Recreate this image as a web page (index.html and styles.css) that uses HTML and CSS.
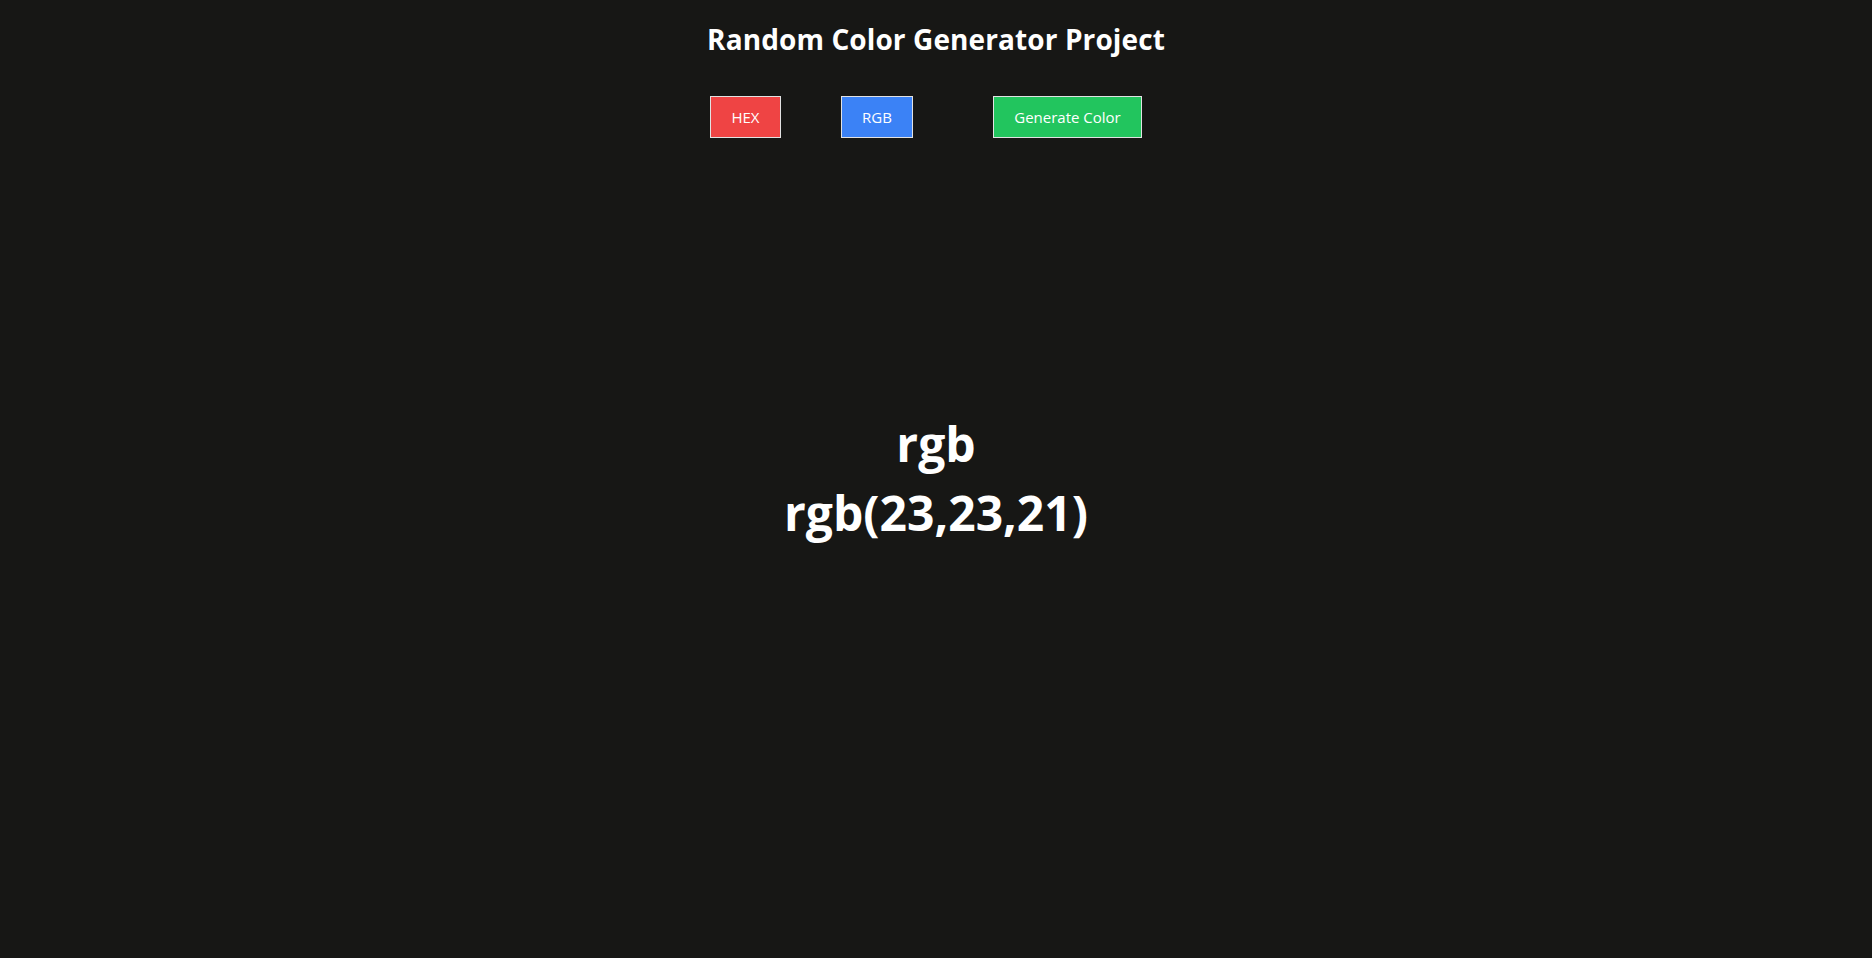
FILE: index.html
```html
<!DOCTYPE html>
<html lang="en">
<head>
<meta charset="utf-8">
<title>Random Color Generator Project</title>
<link rel="stylesheet" href="styles.css">
</head>
<body>
<div class="app">
  <h1 class="title">Random Color Generator Project</h1>
  <div class="controls">
    <button class="btn btn-hex">HEX</button>
    <button class="btn btn-rgb">RGB</button>
    <button class="btn btn-generate">Generate Color</button>
  </div>
  <div class="display">
    <h2 class="mode">rgb</h2>
    <h2 class="value">rgb(23,23,21)</h2>
  </div>
</div>
</body>
</html>
```
FILE: styles.css
```css
html, body {
  margin: 0;
  padding: 0;
}
body {
  background: #171715;
  color: #ffffff;
  font-family: "Open Sans", "Noto Sans", sans-serif;
  width: 100%;
  height: 958px;
  overflow: hidden;
}
.app {
  display: flex;
  flex-direction: column;
  align-items: center;
}
.title {
  margin: 19px 0 0;
  font-size: 28px;
  font-weight: 700;
  line-height: 40px;
  letter-spacing: 0.1px;
}
.controls {
  display: flex;
  justify-content: center;
  margin-top: 37px;
}
.btn {
  box-sizing: border-box;
  height: 42px;
  border: 1px solid #e2e2e2;
  color: #ffffff;
  font-family: "Open Sans", "Noto Sans", sans-serif;
  font-size: 15px;
  padding: 0;
  cursor: pointer;
}
.btn-hex {
  width: 71px;
  background: #ef4444;
  margin-right: 60px;
}
.btn-rgb {
  width: 72px;
  background: #3b82f6;
  margin-right: 80px;
}
.btn-generate {
  width: 149px;
  background: #22c55e;
  margin-right: 20px;
}
.display {
  display: flex;
  flex-direction: column;
  align-items: center;
  margin-top: 274px;
  gap: 5px;
}
.mode, .value {
  margin: 0;
  font-size: 48px;
  font-weight: 700;
  line-height: 64px;
}
```
